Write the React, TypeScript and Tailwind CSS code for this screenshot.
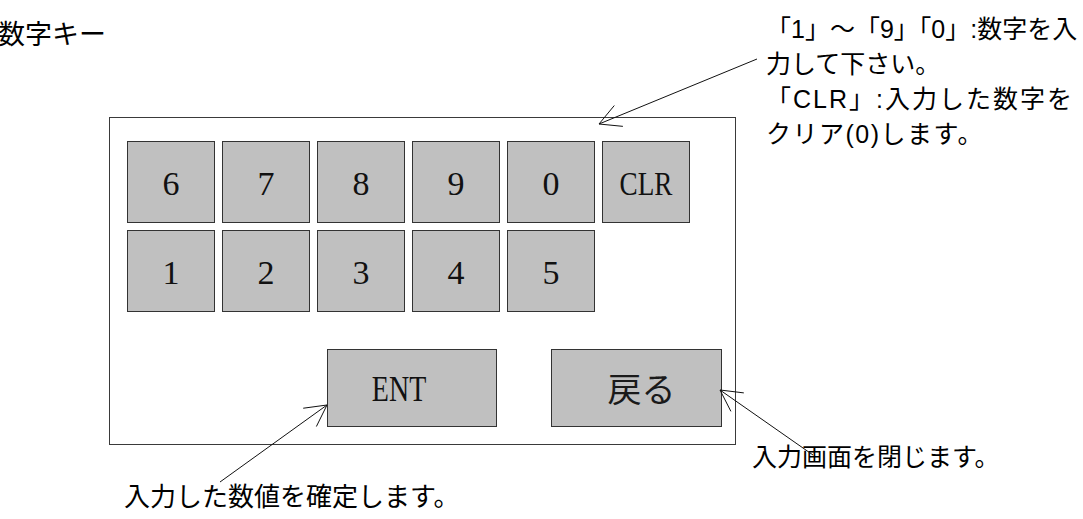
const keysTop = ["6", "7", "8", "9", "0", "CLR"];
const keysBottom = ["1", "2", "3", "4", "5"];

const jp = "font-['Liberation_Sans','Noto_Sans_CJK_JP',sans-serif]";

function Arrow({ x1, y1, x2, y2 }: { x1: number; y1: number; x2: number; y2: number }) {
  // (x2, y2) is the tip; open head drawn with two short strokes
  const a = Math.atan2(y1 - y2, x1 - x2);
  const len = 24;
  const spread = (28 * Math.PI) / 180;
  const h1 = [x2 + len * Math.cos(a - spread), y2 + len * Math.sin(a - spread)];
  const h2 = [x2 + len * Math.cos(a + spread), y2 + len * Math.sin(a + spread)];
  return (
    <g stroke="#111" strokeWidth="1" fill="none">
      <line x1={x1} y1={y1} x2={x2} y2={y2} />
      <polyline points={`${h1[0]},${h1[1]} ${x2},${y2} ${h2[0]},${h2[1]}`} />
    </g>
  );
}

function Key({ label }: { label: string }) {
  const wide = label.length > 1;
  return (
    <div className="w-[88px] h-[82px] bg-[#c0c0c0] border border-[#333] flex items-center justify-center">
      <span
        className={`font-['Liberation_Serif',serif] text-[34px] leading-none text-[#111] pt-[4px] ${
          wide ? "scale-x-[0.8]" : ""
        }`}
      >
        {label}
      </span>
    </div>
  );
}

export default function App() {
  return (
    <div className="relative w-[1083px] h-[519px] bg-white overflow-hidden">
      {/* keypad panel */}
      <div className="ml-[109px] pt-[117px]">
        <div className="w-[627px] h-[328px] border border-[#3a3a3a] pl-[17px] pt-[23px]">
          <div className="flex flex-col gap-[7px]">
            <div className="flex gap-[7px]">
              {keysTop.map((k) => (
                <Key key={k} label={k} />
              ))}
            </div>
            <div className="flex gap-[7px]">
              {keysBottom.map((k) => (
                <Key key={k} label={k} />
              ))}
            </div>
          </div>
          <div className="flex gap-[54px] ml-[200px] mt-[37px]">
            <div className="w-[170px] h-[78px] bg-[#c0c0c0] border border-[#333] flex items-center justify-center pr-[26px]">
              <span className="font-['Liberation_Serif',serif] text-[35px] leading-none text-[#111] scale-x-[0.8] pt-[2px]">
                ENT
              </span>
            </div>
            <div className="w-[171px] h-[78px] bg-[#c0c0c0] border border-[#333] flex items-center justify-center pl-[10px]">
              <span className="font-['Noto_Sans_CJK_JP',serif] font-normal text-[34px] leading-none text-[#1a1a1a]">
                戻る
              </span>
            </div>
          </div>
        </div>
      </div>

      {/* annotations */}
      <div className={`absolute left-[-2px] top-[18px] text-[27px] leading-[34px] text-black ${jp}`}>数字キー</div>

      <div className={`absolute left-[766px] top-[12px] text-[25px] leading-[35px] text-black ${jp}`}>
        <div>「1」～「9」「0」:数字を入</div>
        <div>力して下さい。</div>
        <div className="tracking-[2px]">「CLR」:入力した数字を</div>
        <div className="tracking-[1.5px]">クリア(0)します。</div>
      </div>

      <div className={`absolute left-[124px] top-[479px] text-[26px] leading-[36px] text-black ${jp}`}>
        入力した数値を確定します。
      </div>

      <div className={`absolute left-[752px] top-[440px] text-[25px] leading-[34px] text-black ${jp}`}>
        入力画面を閉じます。
      </div>

      <svg className="absolute inset-0 pointer-events-none" width="1083" height="519">
        <Arrow x1={757} y1={59} x2={599} y2={124} />
        <Arrow x1={220} y1={482} x2={327} y2={405} />
        <Arrow x1={813} y1={455} x2={720} y2={390} />
      </svg>
    </div>
  );
}
